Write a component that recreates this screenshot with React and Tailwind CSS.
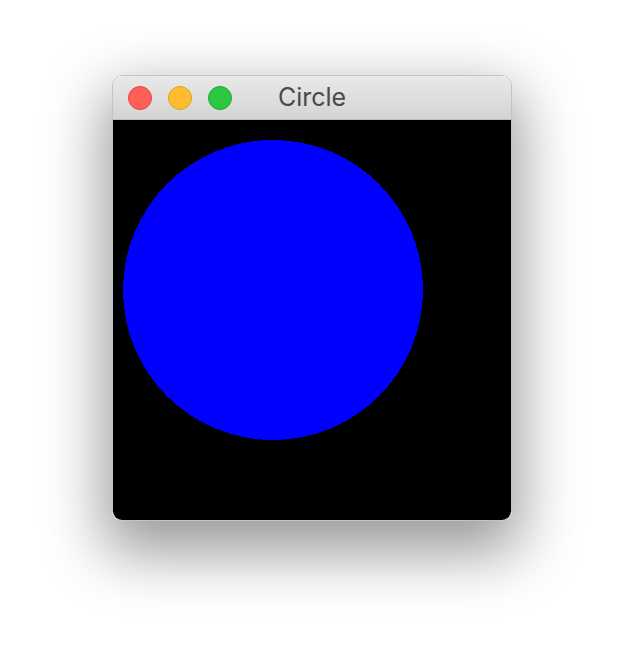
import React from 'react';

function TrafficLight({ color, border }) {
  return <div className={`w-[24px] h-[24px] rounded-full border ${color} ${border}`} />;
}

export default function App() {
  return (
    <div className="w-[624px] h-[668px] bg-white pt-[75px] pl-[112px]">
      <div className="w-[400px] rounded-[10px] overflow-hidden border border-[#c4c4c4] shadow-[0_24px_60px_8px_rgba(0,0,0,0.4)]">
        <div className="relative h-[44px] flex items-center gap-[16px] pl-[15px] bg-gradient-to-b from-[#e9e9e9] to-[#d4d4d4] border-b border-[#bdbdbd]">
          <TrafficLight color="bg-[#ff5f57]" border="border-[#e0443e]" />
          <TrafficLight color="bg-[#febc2e]" border="border-[#dea123]" />
          <TrafficLight color="bg-[#2ac840]" border="border-[#1aab29]" />
          <span className="absolute left-0 right-0 text-center text-[25px] leading-none text-[#4a4a4a] font-['Inter',sans-serif] pointer-events-none">
            Circle
          </span>
        </div>
        <div className="h-[400px] bg-black">
          <svg width="400" height="400" shapeRendering="crispEdges" className="block">
            <circle cx="160" cy="170" r="150" fill="#0000ff" />
          </svg>
        </div>
      </div>
    </div>
  );
}
